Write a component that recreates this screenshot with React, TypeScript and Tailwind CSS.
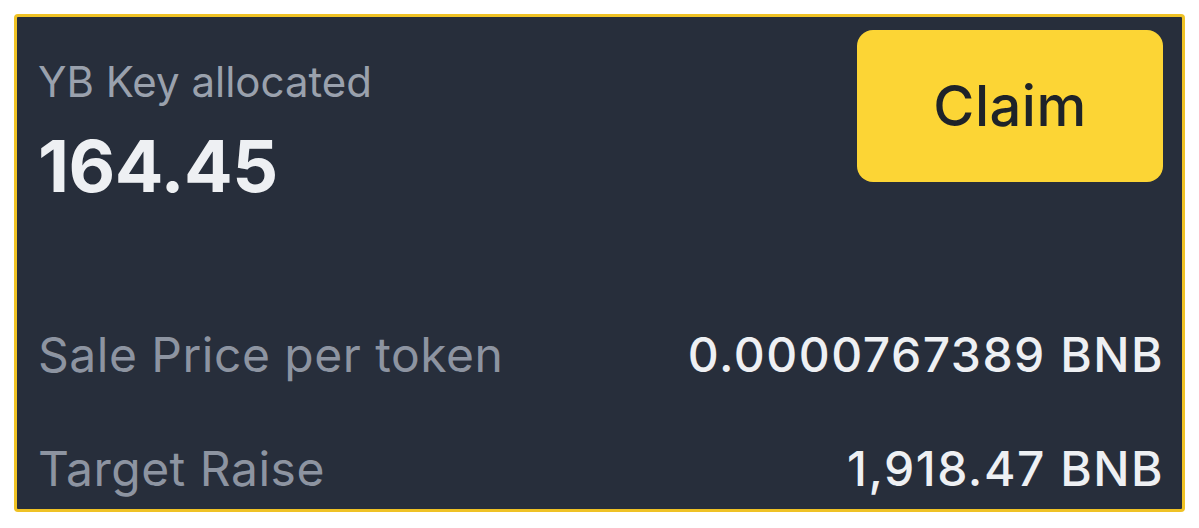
import React from 'react';

const rows = [
  { label: 'Sale Price per token', value: '0.0000767389 BNB', gap: 'mt-[121px]' },
  { label: 'Target Raise', value: '1,918.47 BNB', gap: 'mt-[58px]' },
];

const App: React.FC = () => {
  return (
    <div className="w-[1199px] h-[528px] bg-white p-[14px] font-['Inter','Liberation_Sans',sans-serif]">
      <div className="w-[1171px] h-[498px] rounded-[4px] border-[3px] border-[#efc225] bg-[#272e3b] flex flex-col pl-[21px] pr-[19px] pt-[13px]">
        <div className="flex justify-between items-start">
          <div className="pt-[28px]">
            <div className="text-[42px] leading-[48px] text-[#9aa1ad]">YB Key allocated</div>
            <div className="mt-[20px] text-[72px] leading-[80px] font-bold text-[#eef0f3] tracking-[-0.5px]">164.45</div>
          </div>
          <button className="w-[306px] h-[152px] rounded-[16px] bg-[#fcd535] text-[#1e2329] text-[56px] font-medium tracking-[0.5px]">
            Claim
          </button>
        </div>
        {rows.map(r => (
          <div key={r.label} className={`${r.gap} flex justify-between items-center h-[56px]`}>
            <span className="text-[48px] leading-[56px] text-[#8d94a1] tracking-[0.5px]">{r.label}</span>
            <span className="text-[48px] leading-[56px] font-medium text-[#eef0f3] tracking-[1.5px] -mr-[1px]">{r.value}</span>
          </div>
        ))}
      </div>
    </div>
  );
};

export default App;
